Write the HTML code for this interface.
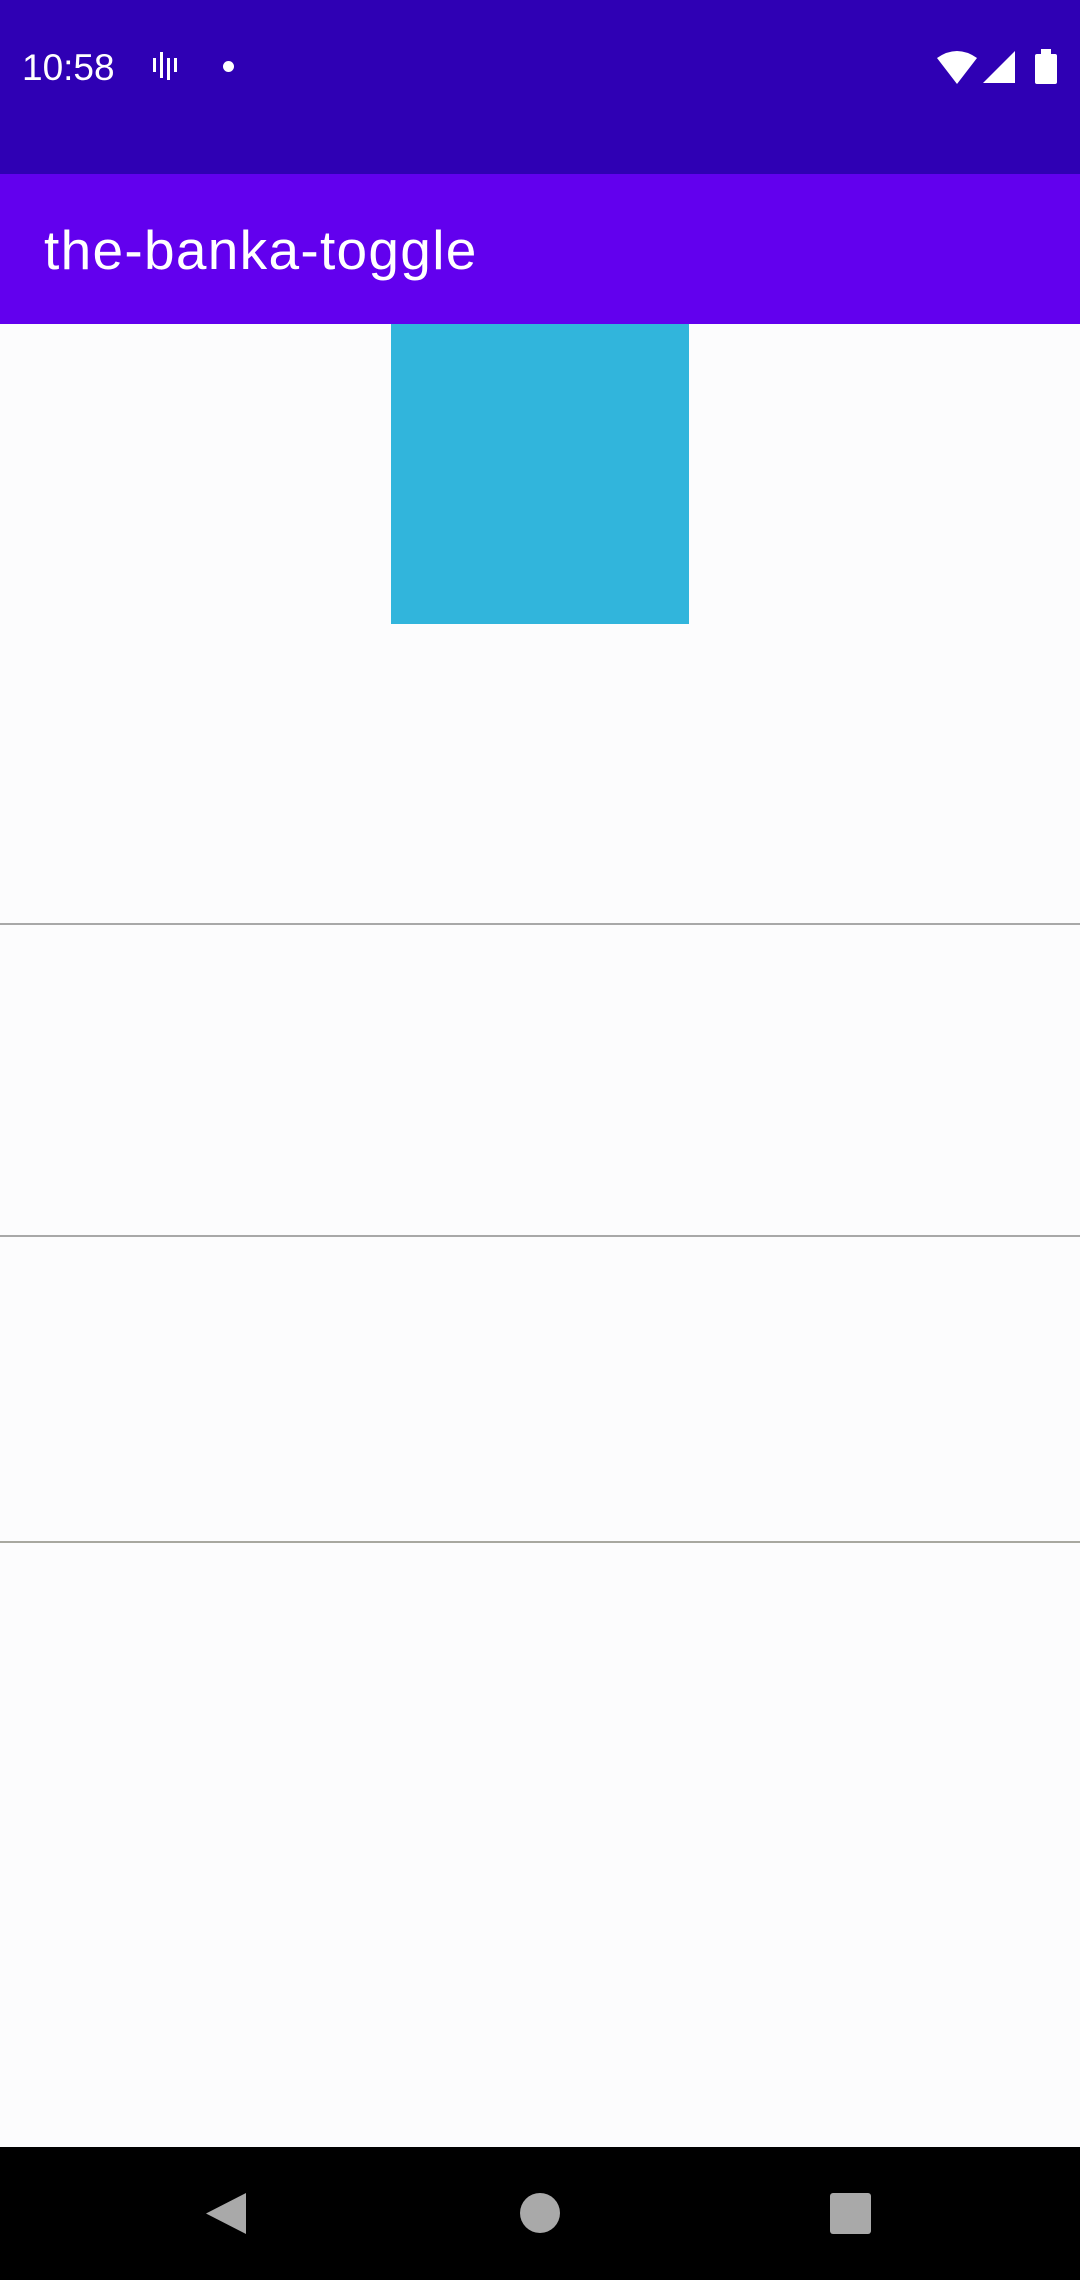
<!DOCTYPE html>
<html><head><meta charset="utf-8"><style>
html,body{margin:0;padding:0}
body{width:1080px;height:2280px;position:relative;background:#fcfcfd;overflow:hidden;font-family:"Liberation Sans",sans-serif}
.abs{position:absolute}
</style></head><body>
<div class="abs" style="left:0;top:0;width:1080px;height:174px;background:#2f00b4"></div>
<div class="abs" style="left:0;top:174px;width:1080px;height:150px;background:#6200ee"></div>
<div class="abs" style="left:22px;top:46px;color:#fff;font-size:37px;line-height:44px">10:58</div>
<svg class="abs" style="left:150px;top:50px" width="40" height="40" viewBox="0 0 40 40">
<rect x="3" y="8" width="3" height="14" fill="#fff"/><rect x="10" y="2" width="3" height="26" fill="#fff"/><rect x="17" y="8" width="3" height="22" fill="#fff"/><rect x="24" y="8" width="3" height="14" fill="#fff"/></svg>
<div class="abs" style="left:223px;top:61px;width:11px;height:11px;border-radius:50%;background:#fff"></div>
<svg class="abs" style="left:935px;top:48px" width="125" height="38" viewBox="0 0 125 38">
<path d="M2 10 Q22 -4 42 10 L22 36 Z" fill="#fff"/>
<path d="M48 35 L80 3 L80 35 Z" fill="#fff"/>
<rect x="100" y="6" width="22" height="30" rx="2" fill="#fff"/><rect x="106" y="1" width="10" height="6" fill="#fff"/>
</svg>
<div class="abs" style="left:44px;top:218px;color:#fff;font-size:55px;line-height:64px;letter-spacing:1.3px">the-banka-toggle</div>
<div class="abs" style="left:391px;top:324px;width:298px;height:300px;background:#31b5dc"></div>
<div class="abs" style="left:0;top:923px;width:1080px;height:2px;background:#a8a8a8"></div>
<div class="abs" style="left:0;top:1235px;width:1080px;height:2px;background:#a8a8a8"></div>
<div class="abs" style="left:0;top:1541px;width:1080px;height:2px;background:#a8a8a0"></div>
<div class="abs" style="left:0;top:2147px;width:1080px;height:133px;background:#000"></div>
<svg class="abs" style="left:0;top:2147px" width="1080" height="133" viewBox="0 0 1080 133">
<path d="M246 46 L246 87 L206 66.5 Z" fill="#a9a9a9"/>
<circle cx="540" cy="66" r="20" fill="#a9a9a9"/>
<rect x="830" y="46" width="41" height="41" rx="3" fill="#a9a9a9"/>
</svg>
</body></html>
